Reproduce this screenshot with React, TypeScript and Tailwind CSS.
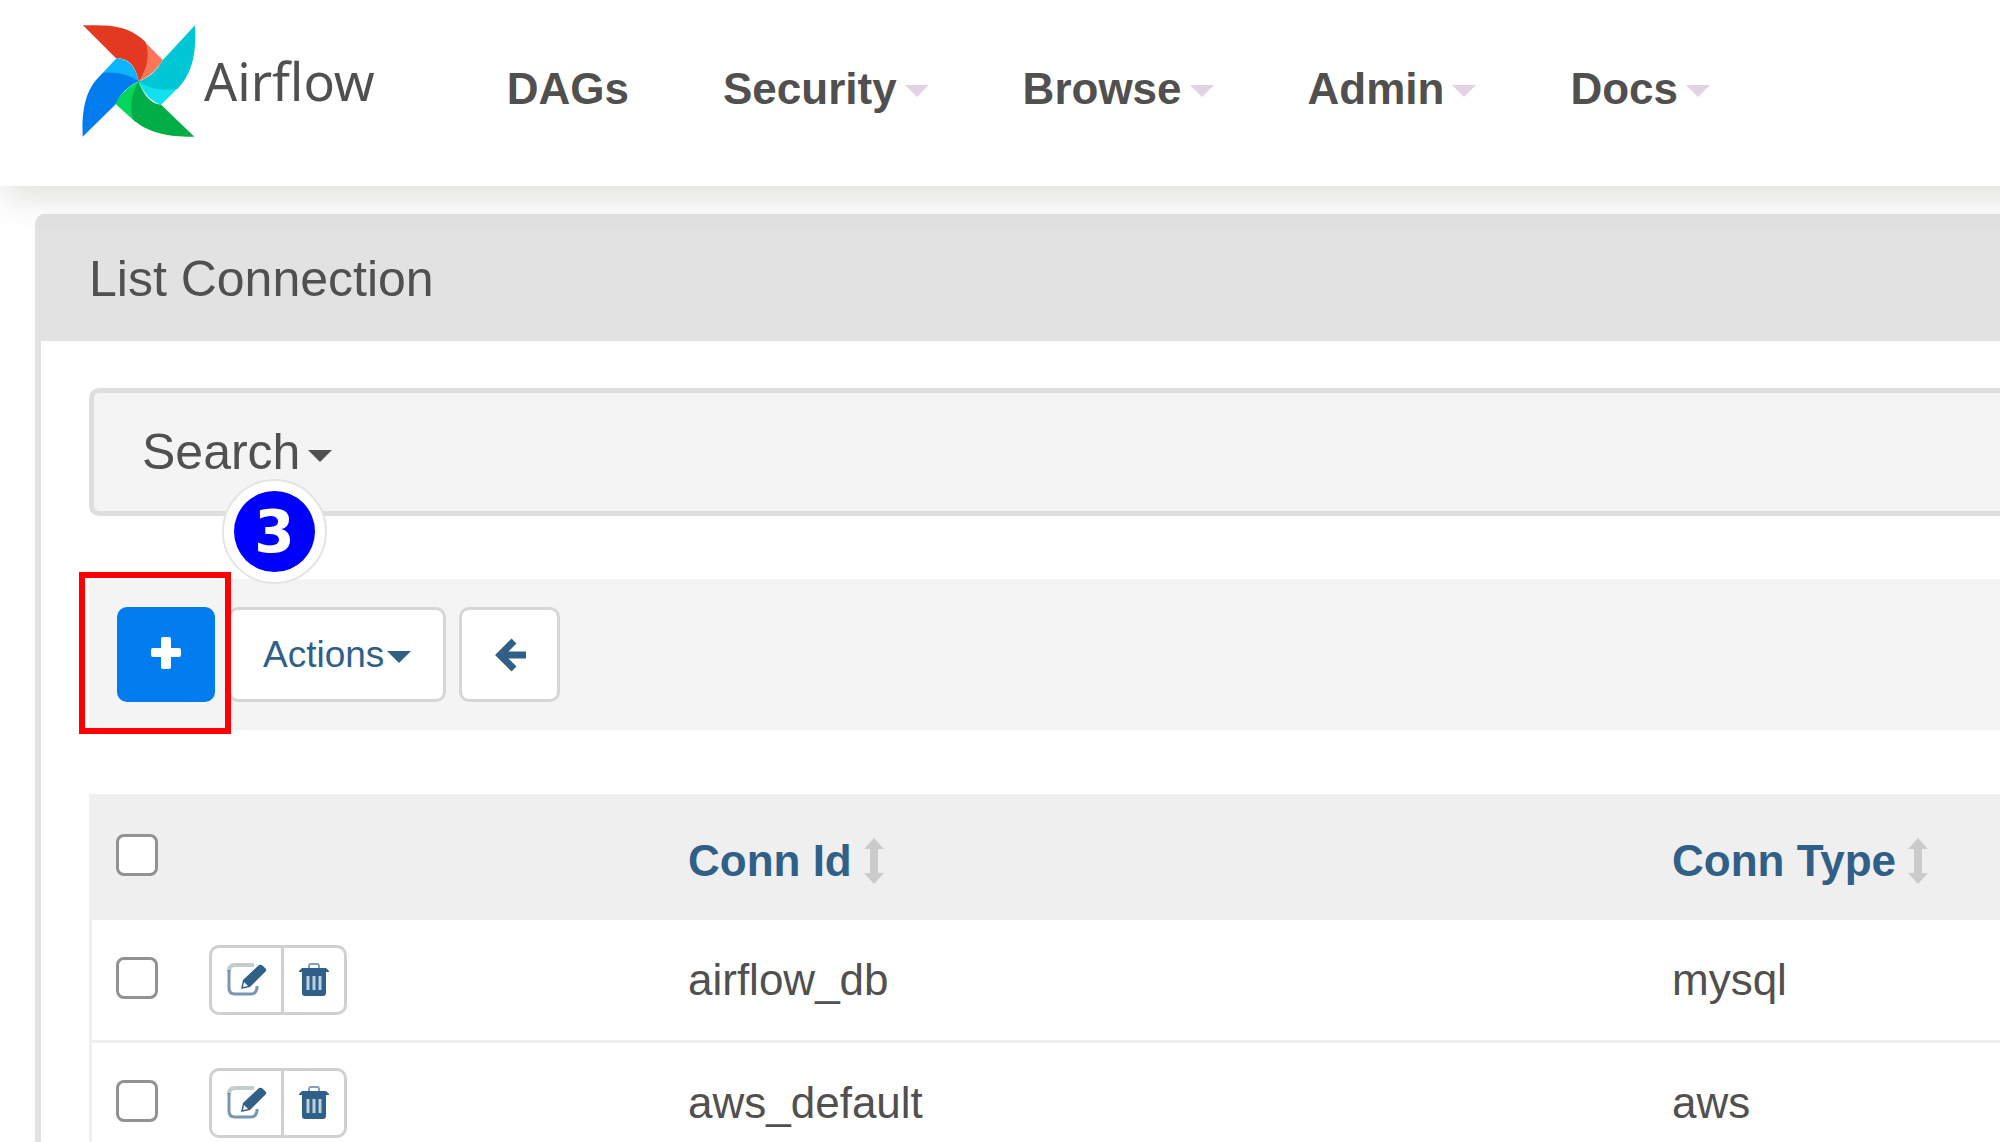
import clsx from "clsx";

const menus = [
    { label: "DAGs", dropdown: false },
    { label: "Security", dropdown: true },
    { label: "Browse", dropdown: true },
    { label: "Admin", dropdown: true },
    { label: "Docs", dropdown: true },
];

const connections = [
    { id: "airflow_db", type: "mysql" },
    { id: "aws_default", type: "aws" },
];

function Logo() {
    return (
        <svg viewBox="65 72 343 343" className="size-[114px] shrink-0" aria-hidden="true">
            <path fill="#ff7557" d="M240 112L308 180C292 208 268 230 235 245Z" />
            <path fill="#e43921" d="M68 76C150 74 206 76 256 126C270 165 262 205 236 245C228 205 208 172 168 176Z" />
            <path fill="#11e1ee" d="M235 244L360 258L303 315C275 305 252 285 235 244Z" />
            <path fill="#00c7d4" d="M405 76C410 160 397 222 352 267C310 275 270 268 235 245C270 232 292 210 308 180Z" />
            <path fill="#04d659" d="M236 245L228 368L165 312C178 285 205 260 236 245Z" />
            <path fill="#00ad46" d="M403 411C330 412 262 400 219 359C208 320 213 285 235 244C250 285 272 312 303 315Z" />
            <path fill="#0cb6ff" d="M120 227L168 176C205 172 228 205 236 245Z" />
            <path fill="#017cee" d="M67 411C64 330 75 262 130 219C170 215 205 225 236 244C203 258 178 285 165 315Z" />
        </svg>
    );
}

function Caret({ className }: { className?: string }) {
    return (
        <svg viewBox="0 0 24 12" className={clsx("h-3 w-6 shrink-0", className)} fill="currentColor" aria-hidden="true">
            <path d="M0 0H24L12 12Z" />
        </svg>
    );
}

function PlusIcon() {
    return (
        <svg viewBox="0 0 32 36" className="h-9 w-8" fill="currentColor" aria-hidden="true">
            <path d="M13 0h6q2 0 2 2v9h8q2 0 2 2v5q0 2-2 2h-8v10q0 2-2 2h-6q-2 0-2-2V20H3q-2 0-2-2v-5q0-2 2-2h8V2q0-2 2-2z" />
        </svg>
    );
}

function ArrowLeftIcon() {
    return (
        <svg viewBox="0 0 32 34" className="h-[34px] w-8" fill="none" stroke="currentColor" strokeWidth="7" aria-hidden="true">
            <path d="M20 3L6 17l14 14M6 17h26" />
        </svg>
    );
}

function EditIcon() {
    return (
        <svg viewBox="0 0 42 36" className="h-9 w-[42px]" aria-hidden="true">
            <path d="M28 3H9Q3 3 3 9" fill="none" stroke="#c3cdcc" strokeWidth="4" />
            <path d="M3 8v18q0 6 6 6h16q5 0 6-6v-2" fill="none" stroke="currentColor" strokeWidth="3" opacity="0.65" />
            <path d="M15 27l2-9L33 3q2-1 4 1l3 3q1 1-1 3L24 25z" fill="currentColor" />
            <path d="M17 25l1-5 4 4z" fill="#fff" />
        </svg>
    );
}

function TrashIcon() {
    return (
        <svg viewBox="0 0 32 36" className="h-9 w-8" aria-hidden="true">
            <path d="M11 7V4q0-2 2-2h6q2 0 2 2v3" fill="none" stroke="currentColor" strokeWidth="2" opacity="0.6" />
            <path d="M4 6h24l3 3v1H1V9zM4 10h24v21q0 3-3 3H7q-3 0-3-3z" fill="currentColor" />
            <path d="M10 14v14M16 14v14M22 14v14" stroke="#b9d2de" strokeWidth="3" />
        </svg>
    );
}

function SortIcon() {
    return (
        <svg viewBox="0 0 20 46" className="h-[46px] w-5" fill="#cbcbcb" aria-hidden="true">
            <path d="M10 0L20 11H14V35H20L10 46L0 35H6V11H0Z" />
        </svg>
    );
}

function Checkbox({ label }: { label: string }) {
    return (
        <input
            type="checkbox"
            aria-label={label}
            className="mb-1 block size-[42px] appearance-none rounded-lg border-[3px] border-[#929292] bg-white"
        />
    );
}

function Header() {
    return (
        <header className="relative z-10 -mr-12 flex items-center bg-white pt-6 pb-12 pl-[82px] shadow-[0_16px_32px_-4px_rgba(60,60,50,0.16)]">
            <a href="#" className="flex items-center gap-2 font-['Noto_Sans',sans-serif] text-[52px]">
                <Logo />
                Airflow
            </a>
            <nav className="ml-[132px] flex gap-[94px] pt-4 text-[44px] font-bold">
                {menus.map((menu) => (
                    <a key={menu.label} href="#" className="flex items-center gap-2">
                        {menu.label}
                        {menu.dropdown && <Caret className="mt-1 text-[#e3d2e4]" />}
                    </a>
                ))}
            </nav>
        </header>
    );
}

function Toolbar() {
    return (
        <div className="mt-[63px] flex gap-[13px] bg-[#f4f4f4] px-7 py-7">
            <div className="relative z-10">
                <button
                    type="button"
                    aria-label="Add"
                    className="flex h-[95px] w-[98px] items-center justify-center rounded-[10px] bg-[#017cee] text-white"
                >
                    <PlusIcon />
                </button>
                <div className="pointer-events-none absolute -top-[35px] -left-[38px] h-[162px] w-[152px] border-[6px] border-[#ff0000]" />
                <div className="absolute -top-32 left-[105px] flex size-[105px] items-center justify-center rounded-full border-2 border-[#e4e4e4] bg-white">
                    <span className="flex size-[81px] items-center justify-center rounded-full bg-[#0000ff] font-['DejaVu_Sans',sans-serif] text-[58px] leading-none font-bold text-white">
                        3
                    </span>
                </div>
            </div>
            <button
                type="button"
                className="flex h-[95px] items-center gap-[3px] rounded-[10px] border-[3px] border-[#d6d6d6] bg-white px-8 text-[37px] text-[#305f88]"
            >
                Actions
                <Caret className="mt-1" />
            </button>
            <button
                type="button"
                aria-label="Back"
                className="flex h-[95px] w-[101px] items-center justify-center rounded-[10px] border-[3px] border-[#d6d6d6] bg-white text-[#305f88]"
            >
                <ArrowLeftIcon />
            </button>
        </div>
    );
}

function ConnectionTable() {
    return (
        <table className="mt-16 w-full table-fixed border-separate border-spacing-0 border-l-[3px] border-[#efefef] text-left text-[44px]">
            <colgroup>
                <col className="w-[93px]" />
                <col className="w-[479px]" />
                <col className="w-[984px]" />
                <col />
            </colgroup>
            <thead className="bg-[#efefef] text-[#305f88]">
                <tr className="h-[126px]">
                    <th className="pl-6">
                        <Checkbox label="Select all" />
                    </th>
                    <th />
                    {["Conn Id", "Conn Type"].map((title) => (
                        <th key={title} className="pt-2 pl-6">
                            <a href="#" className="flex items-center gap-3 whitespace-nowrap">
                                {title}
                                <SortIcon />
                            </a>
                        </th>
                    ))}
                </tr>
            </thead>
            <tbody>
                {connections.map((conn) => (
                    <tr key={conn.id} className="h-[123px]">
                        <td className="border-b-[3px] border-[#efefef] pl-6">
                            <Checkbox label={`Select ${conn.id}`} />
                        </td>
                        <td className="border-b-[3px] border-[#efefef] pl-6">
                            <div className="flex text-[#305f88]">
                                <button
                                    type="button"
                                    aria-label={`Edit ${conn.id}`}
                                    className="flex h-[70px] w-[75px] items-center justify-center rounded-l-[10px] border-[3px] border-[#d0d0d0]"
                                >
                                    <EditIcon />
                                </button>
                                <button
                                    type="button"
                                    aria-label={`Delete ${conn.id}`}
                                    className="flex h-[70px] w-[63px] items-center justify-center rounded-r-[10px] border-[3px] border-l-0 border-[#d0d0d0]"
                                >
                                    <TrashIcon />
                                </button>
                            </div>
                        </td>
                        <td className="border-b-[3px] border-[#efefef] pl-6">{conn.id}</td>
                        <td className="border-b-[3px] border-[#efefef] pl-6">{conn.type}</td>
                    </tr>
                ))}
            </tbody>
        </table>
    );
}

export default function App() {
    return (
        <div className="h-screen overflow-hidden bg-white font-['Liberation_Sans',Arial,sans-serif] text-[#51504f]">
            <Header />
            <main className="mt-7 ml-[35px] rounded-tl-[10px] border-l-[6px] border-[#e2e2e2]">
                <h1 className="bg-[#e2e2e2] px-12 pt-[25px] pb-[22px] text-[50px] leading-[80px]">List Connection</h1>
                <div className="pt-[47px] pl-12">
                    <button
                        type="button"
                        className="flex w-full items-center gap-2 rounded-l-[10px] border-[5px] border-r-0 border-[#dedede] bg-[#f4f4f4] px-12 py-[19px] text-[50px] leading-[80px]"
                    >
                        Search
                        <Caret className="mt-2" />
                    </button>
                    <Toolbar />
                    <ConnectionTable />
                </div>
            </main>
        </div>
    );
}
